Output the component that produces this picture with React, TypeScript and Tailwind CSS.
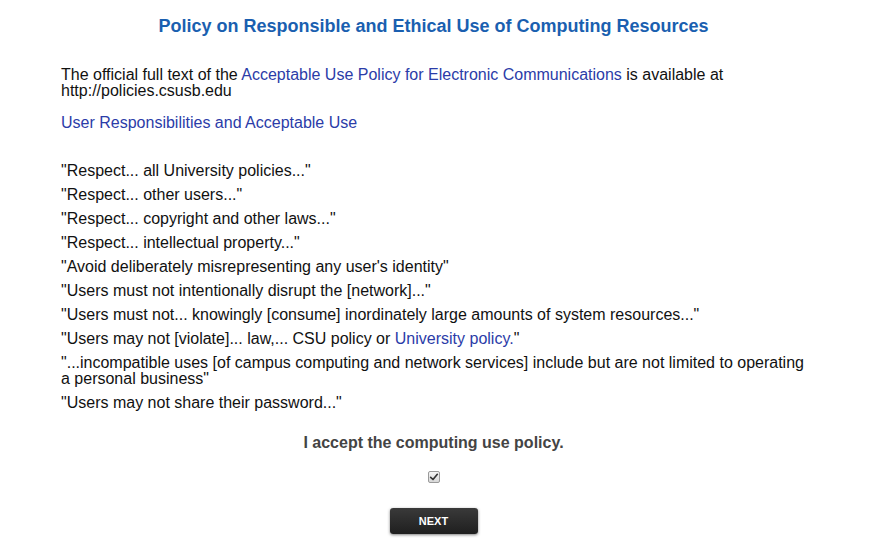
import { useState } from "react";

const items: React.ReactNode[] = [
  <>"Respect... all University policies..."</>,
  <>"Respect... other users..."</>,
  <>"Respect... copyright and other laws..."</>,
  <>"Respect... intellectual property..."</>,
  <>"Avoid deliberately misrepresenting any user's identity"</>,
  <>"Users must not intentionally disrupt the [network]..."</>,
  <>"Users must not... knowingly [consume] inordinately large amounts of system resources..."</>,
  <>
    "Users may not [violate]... law,... CSU policy or{" "}
    <a href="#" className="text-[#2b3ca8]">University policy.</a>"
  </>,
  <>"...incompatible uses [of campus computing and network services] include but are not limited to operating a personal business"</>,
  <>"Users may not share their password..."</>,
];

const App = () => {
  const [accepted, setAccepted] = useState(true);

  return (
    <div className="min-h-screen bg-white text-[#111] font-['Liberation_Sans',Arial,sans-serif]">
      <div className="ml-[61px] w-[745px] pt-[16px]">
        {/* Title */}
        <h1 className="text-center text-[18px] leading-[20px] font-bold text-[#1a5fb0]">
          Policy on Responsible and Ethical Use of Computing Resources
        </h1>

        {/* Intro */}
        <p className="mt-[30px] pt-[1px] text-[16px] leading-[16px]">
          The official full text of the{" "}
          <a href="#" className="text-[#2b3ca8]">
            Acceptable Use Policy for Electronic Communications
          </a>{" "}
          is available at http://policies.csusb.edu
        </p>

        <p className="mt-[16px] text-[16px] leading-[16px]">
          <a href="#" className="text-[#2b3ca8]">User Responsibilities and Acceptable Use</a>
        </p>

        {/* Quotes */}
        <div className="mt-[32px] flex flex-col gap-[8px] text-[16px] leading-[16px]">
          {items.map((item, i) => (
            <p key={i}>{item}</p>
          ))}
        </div>

        {/* Accept */}
        <div className="mt-[23px] flex flex-col items-center">
          <p className="text-[16px] leading-[18px] font-bold text-[#444]">
            I accept the computing use policy.
          </p>
          <button
            type="button"
            role="checkbox"
            aria-checked={accepted}
            onClick={() => setAccepted(!accepted)}
            className="mt-[19px] w-[12px] h-[12px] rounded-[2px] border border-[#9a9a9a] bg-gradient-to-b from-[#f4f4f4] to-[#d8d8d8] flex items-center justify-center"
          >
            {accepted && (
              <svg viewBox="0 0 12 12" className="w-[10px] h-[10px]">
                <path d="M2 6.5 L4.8 9 L10 2.8" fill="none" stroke="#333" strokeWidth="2" strokeLinecap="round" strokeLinejoin="round" />
              </svg>
            )}
          </button>
          <button className="mt-[25px] w-[88px] h-[26px] rounded-[3px] bg-gradient-to-b from-[#3a3a3a] to-[#1f1f1f] text-white text-[11px] font-bold shadow-[0_1px_3px_rgba(0,0,0,0.5)]">
            NEXT
          </button>
        </div>
      </div>
    </div>
  );
};

export default App;
